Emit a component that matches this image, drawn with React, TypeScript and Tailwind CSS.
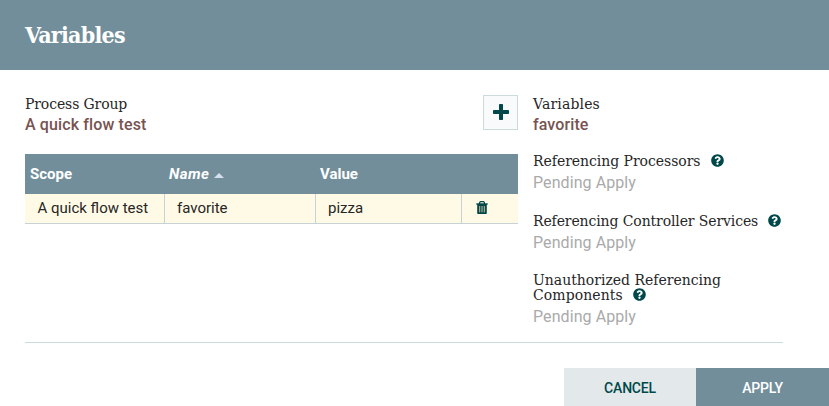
import type { ReactNode } from "react";
import { FaQuestionCircle } from "react-icons/fa";

function Label({ children }: { children: ReactNode }) {
  return (
    <div className="font-['DejaVu_Serif',serif] text-[14px] leading-[15px] whitespace-nowrap text-[#262626]">
      {children}
    </div>
  );
}

function Help() {
  return <FaQuestionCircle className="ml-[10px] inline-block size-[13px] align-[-1px] text-[#004849]" />;
}

function Pending() {
  return <div className="mt-[5px] text-[16px] leading-[18px] tracking-[0.08px] text-[#aaaaaa]">Pending Apply</div>;
}

function TrashIcon() {
  return (
    <svg width="12" height="14" viewBox="0 0 12 14">
      <path d="M0.3 3H11.7" stroke="#004849" strokeWidth="1.4" />
      <path d="M3.6 3V1.4L4.4 0.7H7.6L8.4 1.4V3" fill="none" stroke="#004849" strokeWidth="1.2" />
      <path d="M1.2 3H10.8V12.2Q10.8 13 10 13H2Q1.2 13 1.2 12.2Z" fill="#004849" />
      <path d="M3.7 5V11.3M6 5V11.3M8.3 5V11.3" stroke="#e2cfae" strokeWidth="0.9" />
    </svg>
  );
}

export default function App() {
  return (
    <div className="flex h-[406px] w-[829px] flex-col overflow-hidden bg-white font-['Roboto',sans-serif]">
      <header className="flex h-[70px] shrink-0 items-center bg-[#728e9b] px-[25px]">
        <h1 className="font-['DejaVu_Serif_Condensed','DejaVu_Serif',serif] text-[23px] leading-[30px] font-bold tracking-[-0.75px] text-white [font-stretch:condensed]">
          Variables
        </h1>
      </header>

      <main className="mr-[46px] ml-[25px] flex h-[273px] shrink-0 border-b border-[#ccdadb]">
        <section className="w-[493px] shrink-0">
          <div className="flex h-[84px] justify-between pt-[25px]">
            <div className="pt-[2px]">
              <Label><span className="tracking-[-0.12px]">Process Group</span></Label>
              <div className="mt-[4px] text-[16px] leading-[18px] font-medium tracking-[0.12px] text-[#775351]">A quick flow test</div>
            </div>
            <button className="flex size-[35px] items-center justify-center border border-[#ccdadb] bg-[#f9fafb] pb-px pl-px">
              <svg width="16" height="16" viewBox="0 0 16 16" fill="#004849">
                <rect y="6" width="16" height="4" rx="0.8" />
                <rect x="6" width="4" height="16" rx="0.8" />
              </svg>
            </button>
          </div>

          <div className="grid h-[40px] grid-cols-[139px_151px_203px] items-center bg-[#728e9b] text-[15px] font-bold text-white">
            <div className="pl-[5px]">Scope</div>
            <div className="flex items-center pl-[5px] tracking-[0.45px] italic">
              Name
              <svg className="mt-[3px] ml-[5px]" width="10" height="5" viewBox="0 0 10 5" fill="#d5e0ec">
                <path d="M5 0L10 5H0Z" />
              </svg>
            </div>
            <div className="pl-[5px]">Value</div>
          </div>
          <div className="grid h-[30px] grid-cols-[140px_151px_146px_56px] border-b border-[#c7d2d7] bg-[#fffae5] text-[15px] leading-[29px] text-[#262626]">
            <div className="border-r border-[#c7d2d7] pl-[12.5px] whitespace-nowrap">A quick flow test</div>
            <div className="border-r border-[#c7d2d7] pl-[12px]">favorite</div>
            <div className="border-r border-[#c7d2d7] pl-[12px]">pizza</div>
            <div className="pt-[7px] pl-[14px]"><TrashIcon /></div>
          </div>
        </section>

        <aside className="ml-[15px] pt-[27px]">
          <Label><span className="tracking-[0.15px]">Variables</span></Label>
          <div className="mt-[4px] text-[16px] leading-[18px] font-medium tracking-[0.1px] text-[#775351]">favorite</div>
          <div className="mt-[20px]">
            <Label><span className="tracking-[-0.04px]">Referencing Processors</span><Help /></Label>
            <Pending />
          </div>
          <div className="mt-[22px]">
            <Label><span className="tracking-[-0.11px]">Referencing Controller Services</span><Help /></Label>
            <Pending />
          </div>
          <div className="mt-[21px]">
            <Label>Unauthorized Referencing<br /><span className="tracking-[0.08px]">Components</span><Help /></Label>
            <Pending />
          </div>
        </aside>
      </main>

      <footer className="mt-[25px] flex h-[38px] shrink-0 justify-end text-[14px] font-medium tracking-[-0.2px]">
        <button className="w-[132px] bg-[#e3e8eb] pt-[2px] text-[#004849]">CANCEL</button>
        <button className="w-[133px] bg-[#728e9b] pt-[2px] text-white">APPLY</button>
      </footer>
    </div>
  );
}
